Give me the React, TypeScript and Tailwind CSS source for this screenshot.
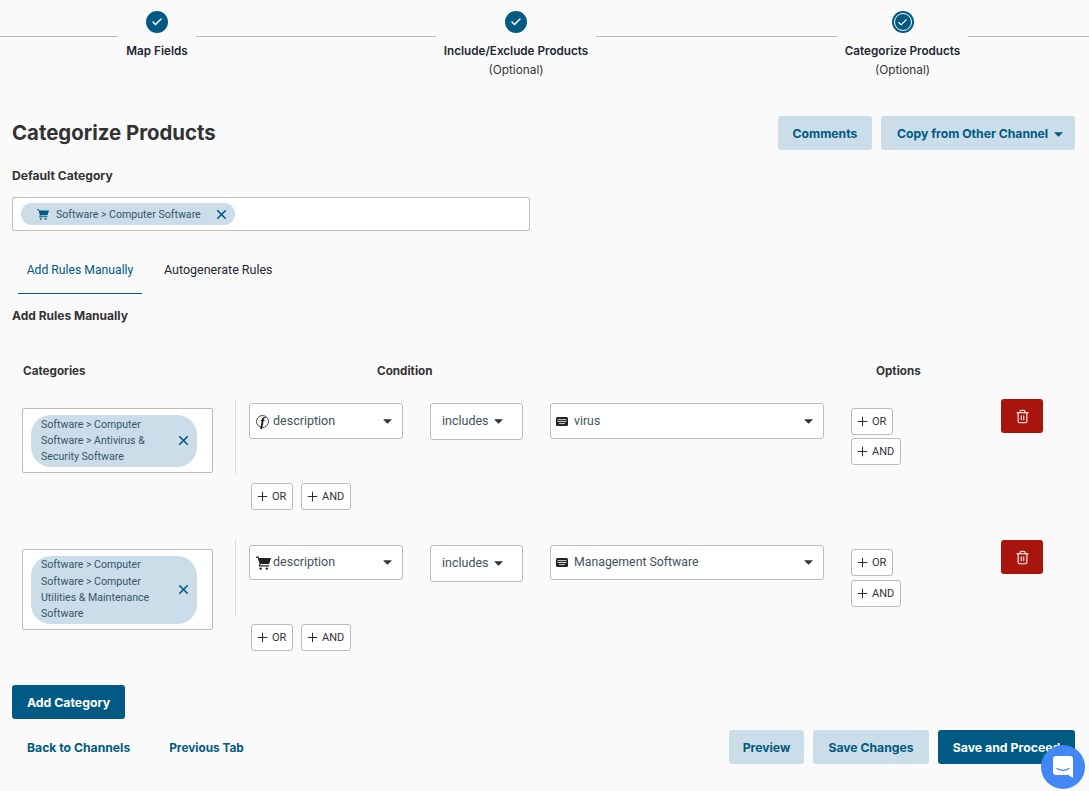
import React from "react";
import { Check, Plus, Trash2, X } from "lucide-react";

const Cart = ({ className }: { className?: string }) => (
  <svg viewBox="0 0 16 16" className={className} fill="currentColor">
    <path d="M0 1.5h2.6l.6 1.8H16l-2 6.4H4.9L4.5 11H14v1.3H2.9l.9-2.9L1.8 2.8H0z" />
    <circle cx="5" cy="14.5" r="1.3" />
    <circle cx="11.5" cy="14.5" r="1.3" />
  </svg>
);

const Caret = ({ className }: { className?: string }) => (
  <svg viewBox="0 0 10 6" className={className} fill="currentColor">
    <path d="M0.3 0.4h9.4a.3.3 0 0 1 .2.5L5.3 5.5a.4.4 0 0 1-.6 0L.1.9a.3.3 0 0 1 .2-.5z" />
  </svg>
);

const FieldIcon = () => (
  <svg viewBox="0 0 12 9" className="h-[9px] w-[12px] shrink-0">
    <rect width="12" height="9" rx="1.5" fill="#222" />
    <path d="M1.5 2.6h9M1.5 4.5h9" stroke="#fff" strokeWidth="0.8" />
    <path d="M3 6.6h6" stroke="#fff" strokeWidth="0.8" />
  </svg>
);

const FnIcon = () => (
  <span className="flex h-[13px] w-[13px] shrink-0 items-center justify-center rounded-full border border-[#444] font-['Liberation_Serif',serif] text-[13px] font-bold italic leading-none text-black">
    f
  </span>
);

const OutlineBtn = ({ label, w }: { label: string; w: string }) => (
  <button className={`flex h-[27px] ${w} items-center rounded-[3px] border border-[#bbbbbb] bg-white pl-[3px] font-['Roboto',sans-serif] text-[11px] text-[#333]`}>
    <Plus className="mr-[2px] h-[15px] w-[15px] shrink-0 text-[#222]" strokeWidth={1.5} />
    <span className="pt-[2px]">{label}</span>
  </button>
);

const Rule = ({
  lines,
  icon,
  value,
  boxH,
  chipH,
  top,
  selH,
  chipLead,
  optGap,
}: {
  lines: string[];
  icon: React.ReactNode;
  value: string;
  boxH: string;
  chipH: string;
  top: string;
  selH: string;
  chipLead: string;
  optGap: string;
}) => (
  <div className="flex items-start">
    <div className={`ml-[10px] mt-[9px] flex w-[191px] shrink-0 items-center rounded-[2px] border border-[#bbbbbb] bg-white pl-[8px] ${boxH}`}>
      <div className={`flex w-[166px] items-center rounded-[20px] bg-[#cbdde8] pl-[10px] pr-[6px] ${chipH}`}>
        <div className={`flex-1 whitespace-nowrap pt-[1px] font-['Roboto',sans-serif] text-[10.6px] text-[#33566b] ${chipLead}`}>
          {lines.map((l) => (
            <div key={l}>{l}</div>
          ))}
        </div>
        <X className="h-[15px] w-[15px] text-[#005a83]" strokeWidth={2.6} />
      </div>
    </div>
    <div className="ml-[22px] h-[76px] w-px shrink-0 bg-[#dddddd]" />
    <div className="ml-[13px] w-[800px] shrink-0 font-['Roboto',sans-serif]">
      <div className="flex h-[66px] items-start">
        <div className={`${top} flex ${selH} w-[154px] items-center rounded-[3px] border border-[#bbbbbb] bg-white pl-[6px] pr-[10px] text-[12.5px] text-[#44505a]`}>
          {icon}
          <span className="ml-[4px] flex-1">description</span>
          <Caret className="h-[5px] w-[9px] text-[#333]" />
        </div>
        <div className={`${top} ml-[27px] flex h-[37px] w-[93px] items-center rounded-[3px] border border-[#bbbbbb] bg-white pl-[11px] text-[12.5px] text-[#44505a]`}>
          includes
          <Caret className="ml-[5px] h-[5px] w-[9px] text-[#333]" />
        </div>
        <div className={`${top} ml-[27px] flex ${selH} w-[274px] items-center rounded-[3px] border border-[#bbbbbb] bg-white pl-[5px] pr-[10px] text-[12.3px] text-[#44505a]`}>
          <FieldIcon />
          <span className="ml-[6px] flex-1">{value}</span>
          <Caret className="h-[5px] w-[9px] text-[#333]" />
        </div>
        <div className={`ml-[27px] mt-[9px] flex w-[150px] shrink-0 flex-col items-start ${optGap}`}>
          <OutlineBtn label="OR" w="w-[42px]" />
          <OutlineBtn label="AND" w="w-[50px]" />
        </div>
        <button className="flex h-[34px] w-[42px] items-center justify-center rounded-[3px] bg-[#a8150c] text-white">
          <Trash2 className="h-[15px] w-[15px]" strokeWidth={1.7} />
        </button>
      </div>
      <div className="ml-[2px] mt-[18px] flex gap-[8px]">
        <OutlineBtn label="OR" w="w-[42px]" />
        <OutlineBtn label="AND" w="w-[50px]" />
      </div>
    </div>
  </div>
);

const Step = ({ w, title, opt, current }: { w: string; title: string; opt?: boolean; current?: boolean }) => (
  <div className={`${w} flex shrink-0 flex-col items-center`}>
    <div className="mt-[11px] flex h-[22px] w-[22px] items-center justify-center rounded-full bg-[#005a83]">
      {current ? (
        <div className="flex h-[18px] w-[18px] items-center justify-center rounded-full border border-white">
          <Check className="h-[11px] w-[11px] text-white" strokeWidth={2.5} />
        </div>
      ) : (
        <Check className="h-[12px] w-[12px] text-white" strokeWidth={3} />
      )}
    </div>
    <div className="mt-[9px] whitespace-nowrap text-[11.7px] font-semibold leading-[18px] text-[#1d2733]">{title}</div>
    {opt && <div className="mt-[1px] text-[11.8px] leading-[18px] text-[#333]">(Optional)</div>}
  </div>
);

const primary = "h-[34px] whitespace-nowrap rounded-[3px] bg-[#005a83] pt-[2px] text-[12.3px] font-bold text-white";
const soft = "h-[34px] whitespace-nowrap rounded-[3px] bg-[#cbdde8] pt-[2px] text-[12.2px] font-bold text-[#005a83]";

export default function App() {
  return (
    <div className="relative h-[791px] w-[1089px] overflow-hidden bg-[#fafafa] font-['Inter',sans-serif]">
      <div className="flex h-[80px] items-start">
        <div className="mt-[36px] h-px w-[118px] shrink-0 bg-[#bbbbbb]" />
        <Step w="w-[78px]" title="Map Fields" />
        <div className="mt-[36px] h-px w-[240px] shrink-0 bg-[#bbbbbb]" />
        <Step w="w-[160px]" title="Include/Exclude Products" opt />
        <div className="mt-[36px] h-px w-[241px] shrink-0 bg-[#bbbbbb]" />
        <Step w="w-[131px]" title="Categorize Products" opt current />
        <div className="mt-[36px] h-px w-[121px] shrink-0 bg-[#bbbbbb]" />
      </div>

      <div className="pl-[12px] pr-[14px]">
        <div className="mt-[36px] flex items-center">
          <h1 className="flex-1 text-[20.4px] font-bold text-[#333]">Categorize Products</h1>
          <button className={`${soft} w-[94px]`}>Comments</button>
          <button className={`${soft} ml-[9px] flex w-[194px] items-center pl-[16px]`}>
            <span className="flex-1 text-left">Copy from Other Channel</span>
            <Caret className="mr-[12px] h-[5px] w-[9px]" />
          </button>
        </div>

        <div className="mt-[17px] text-[12.1px] font-bold leading-[18px] text-[#333]">Default Category</div>
        <div className="mt-[12px] flex h-[34px] w-[518px] items-center rounded-[2px] border border-[#bbbbbb] bg-white pl-[8px]">
          <div className="flex h-[22px] w-[214px] items-center rounded-[11px] bg-[#cbdde8] pl-[16px]">
            <Cart className="h-[12px] w-[12px] shrink-0 text-[#005a83]" />
            <span className="ml-[7px] flex-1 whitespace-nowrap pt-[1px] font-['Roboto',sans-serif] text-[10.6px] text-[#33566b]">Software &gt; Computer Software</span>
            <X className="mr-[6px] h-[15px] w-[15px] text-[#005a83]" strokeWidth={2.6} />
          </div>
        </div>

        <div className="ml-[6px] mt-[22px] flex items-start font-['Roboto',sans-serif]">
          <div className="w-[124px] border-b border-[#005a83] pb-[14px] pt-[8px] text-center text-[12.2px] leading-[18px] text-[#005a83]">
            Add Rules Manually
          </div>
          <div className="ml-[22px] pt-[8px] text-[12.5px] leading-[18px] text-[#1d2733]">Autogenerate Rules</div>
        </div>

        <div className="mt-[13px] text-[12px] font-bold leading-[18px] text-[#333]">Add Rules Manually</div>

        <div className="mt-[37px] flex text-[11.7px] font-bold leading-[18px] text-[#333]">
          <div className="ml-[11px] w-[354px]">Categories</div>
          <div className="w-[499px]">Condition</div>
          <div>Options</div>
        </div>

        <div className="mt-[19px]">
          <Rule
            lines={["Software > Computer", "Software > Antivirus &", "Security Software"]}
            icon={<FnIcon />}
            value="virus"
            boxH="h-[65px]"
            chipH="h-[52px]"
            chipLead="leading-[16px]"
            top="mt-[4px]"
            selH="h-[36px]"
            optGap="gap-[3px]"
          />
        </div>
        <div className="mt-[30px]">
          <Rule
            lines={["Software > Computer", "Software > Computer", "Utilities & Maintenance", "Software"]}
            icon={<Cart className="-mr-[2px] h-[15px] w-[15px] shrink-0 text-[#222]" />}
            value="Management Software"
            boxH="h-[81px]"
            chipH="h-[68px]"
            chipLead="leading-[16.3px]"
            top="mt-[5px]"
            selH="h-[35px]"
            optGap="gap-[4px]"
          />
        </div>

        <button className={`${primary} mt-[34px] block w-[113px]`}>Add Category</button>

        <div className="mt-[11px] flex items-center">
          <a className="ml-[15px] pt-[2px] text-[12.2px] font-bold leading-[18px] text-[#005a83]">Back to Channels</a>
          <a className="ml-[39px] flex-1 pt-[2px] text-[11.8px] font-bold leading-[18px] text-[#005a83]">Previous Tab</a>
          <button className={`${soft} w-[75px]`}>Preview</button>
          <button className={`${soft} ml-[9px] w-[116px]`}>Save Changes</button>
          <button className={`${primary} ml-[9px] w-[137px]`}>Save and Proceed</button>
        </div>
      </div>

      <div className="absolute left-[1041px] top-[745px] flex h-[44px] w-[44px] items-center justify-center rounded-full bg-[#4287f5]">
        <svg viewBox="0 0 22 24" className="h-[24px] w-[22px]">
          <path d="M4 1h14a3 3 0 0 1 3 3v19l-4.5-3H4a3 3 0 0 1-3-3V4a3 3 0 0 1 3-3z" fill="#fff" />
          <path d="M5 13.5c3.5 2.5 8.5 2.5 12 0" stroke="#4287f5" strokeWidth="1.2" fill="none" strokeLinecap="round" />
        </svg>
      </div>
    </div>
  );
}
